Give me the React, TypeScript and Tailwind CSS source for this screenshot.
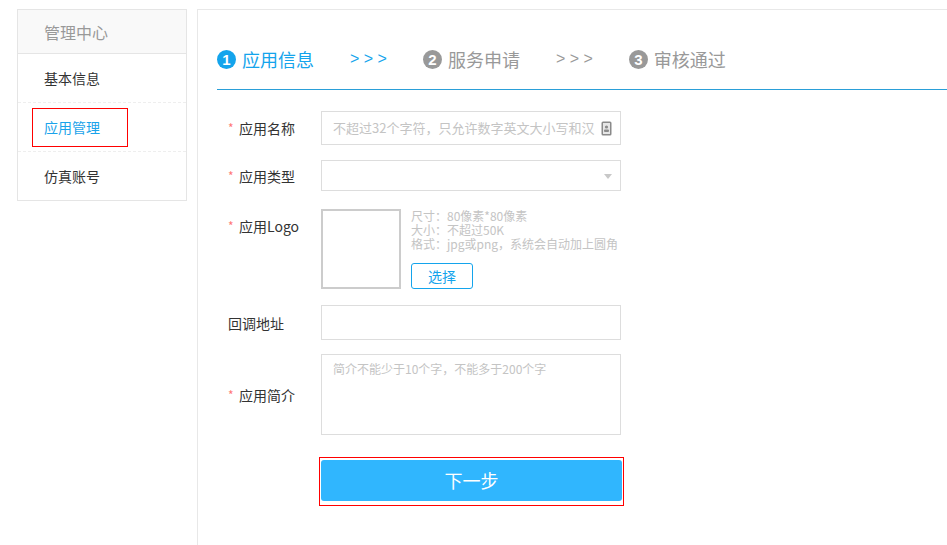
const font = { fontFamily: '"Noto Sans CJK SC", "Liberation Sans", sans-serif' };

const menu = [
  { label: "基本信息", active: false },
  { label: "应用管理", active: true },
  { label: "仿真账号", active: false },
];

const StepNum = ({ n, active }: { n: number; active: boolean }) => (
  <span
    className={`flex h-[19px] w-[19px] items-center justify-center rounded-full text-[15px] font-bold leading-none text-white ${
      active ? "bg-[#14a4ec]" : "bg-[#999999]"
    }`}
    style={{ fontFamily: '"Liberation Sans", sans-serif' }}
  >
    {n}
  </span>
);

const Arrows = ({ active }: { active: boolean }) => (
  <span
    className={`text-[16px] leading-none ${active ? "text-[#14a4ec]" : "text-[#999999]"}`}
    style={{ fontFamily: '"Liberation Sans", sans-serif', whiteSpace: "pre" }}
  >
    {"> > >"}
  </span>
);

const Label = ({ text, required = true }: { text: string; required?: boolean }) => (
  <div className="flex w-[93px] shrink-0 items-center text-[14px] leading-[20px] text-[#333333]">
    {required && <span className="w-[11px] text-[12px] text-[#f77]">*</span>}
    <span>{text}</span>
  </div>
);

export default function App() {
  return (
    <div className="flex h-[545px] w-full overflow-hidden bg-white pl-[17px] pt-[9px]" style={font}>
      {/* sidebar */}
      <div className="h-[192px] w-[170px] shrink-0 border border-[#e5e5e5]">
        <div className="flex h-[44px] items-center border-b border-[#e5e5e5] bg-[#f9f9f9] pl-[26px] text-[16px] text-[#999999]">
          管理中心
        </div>
        {menu.map((item, i) => (
          <div
            key={item.label}
            className={`flex h-[49px] items-center pl-[14px] ${
              i < menu.length - 1 ? "border-b border-dashed border-[#eeeeee]" : ""
            }`}
          >
            <div
              className={`flex h-[39px] w-[96px] items-center pl-[11px] text-[14px] ${
                item.active ? "border border-[#ff0000] text-[#1aa3ea]" : "border border-transparent text-[#333333]"
              }`}
            >
              {item.label}
            </div>
          </div>
        ))}
      </div>

      {/* main */}
      <div className="ml-[10px] flex-1 border-l border-t border-[#e8e8e8] pl-[19px]">
        <div className="flex h-[80px] items-start gap-[36px] border-b border-[#2a9fd8] pt-[31px]">
          <div className="flex h-[36px] items-center gap-[6px]">
            <StepNum n={1} active />
            <span className="text-[18px] text-[#14a4ec]">应用信息</span>
          </div>
          <div className="flex h-[36px] items-center">
            <Arrows active />
          </div>
          <div className="flex h-[36px] items-center gap-[6px]">
            <StepNum n={2} active={false} />
            <span className="text-[18px] text-[#999999]">服务申请</span>
          </div>
          <div className="flex h-[36px] items-center">
            <Arrows active={false} />
          </div>
          <div className="flex h-[36px] items-center gap-[6px]">
            <StepNum n={3} active={false} />
            <span className="text-[18px] text-[#999999]">审核通过</span>
          </div>
        </div>

        <div className="pl-[11px]">
          {/* name */}
          <div className="mt-[21px] flex items-center">
            <Label text="应用名称" />
            <div className="relative flex h-[34px] w-[300px] items-center border border-[#dddddd] pl-[11px] text-[13px] text-[#c4c4c4]">
              <span className="whitespace-nowrap">不超过32个字符，只允许数字英文大小写和汉</span>
              <svg className="absolute right-[8px] top-[9px]" width="11" height="15" viewBox="0 0 11 15">
                <rect x="0.5" y="0.5" width="10" height="14" rx="1.5" fill="#8a8a8a" />
                <rect x="2" y="2" width="7" height="11" fill="#e6e6e6" />
                <circle cx="5.5" cy="6" r="1.6" fill="#8a8a8a" />
                <rect x="3" y="8.5" width="5" height="2.5" rx="1" fill="#8a8a8a" />
              </svg>
            </div>
          </div>

          {/* type */}
          <div className="mt-[15px] flex items-center">
            <Label text="应用类型" />
            <div className="relative h-[31px] w-[300px] border border-[#dddddd]">
              <span className="absolute right-[8px] top-[13px] h-0 w-0 border-x-[4px] border-t-[5px] border-x-transparent border-t-[#c8c8c8]" />
            </div>
          </div>

          {/* logo */}
          <div className="mt-[18px] flex items-start">
            <div className="pt-[7px]">
              <Label text="应用Logo" />
            </div>
            <div className="h-[80px] w-[80px] shrink-0 border-2 border-[#cccccc]" />
            <div className="ml-[10px] flex flex-col">
              <div className="text-[12px] leading-[14px] text-[#c4c4c4]">
                <div>尺寸：80像素*80像素</div>
                <div>大小：不超过50K</div>
                <div>格式：jpg或png，系统会自动加上圆角</div>
              </div>
              <button className="mt-[12px] flex h-[26px] w-[62px] items-center justify-center rounded-[3px] border border-[#14a4ec] text-[14px] text-[#14a4ec]">
                选择
              </button>
            </div>
          </div>

          {/* callback */}
          <div className="mt-[16px] flex items-center">
            <Label text="回调地址" required={false} />
            <div className="h-[35px] w-[300px] border border-[#dddddd]" />
          </div>

          {/* intro */}
          <div className="mt-[14px] flex items-center">
            <Label text="应用简介" />
            <div className="h-[81px] w-[300px] border border-[#dddddd] pl-[11px] pt-[5px] text-[12px] leading-[18px] text-[#c4c4c4]">
              简介不能少于10个字，不能多于200个字
            </div>
          </div>
        </div>

        {/* next */}
        <div className="ml-[102px] mt-[22px] w-[305px] border border-[#ff0000] px-[1px] pb-[4px] pt-[2px]">
          <button className="flex h-[41px] w-[301px] items-center justify-center rounded-[3px] bg-[#30b6fe] text-[18px] text-white">
            下一步
          </button>
        </div>
      </div>
    </div>
  );
}
